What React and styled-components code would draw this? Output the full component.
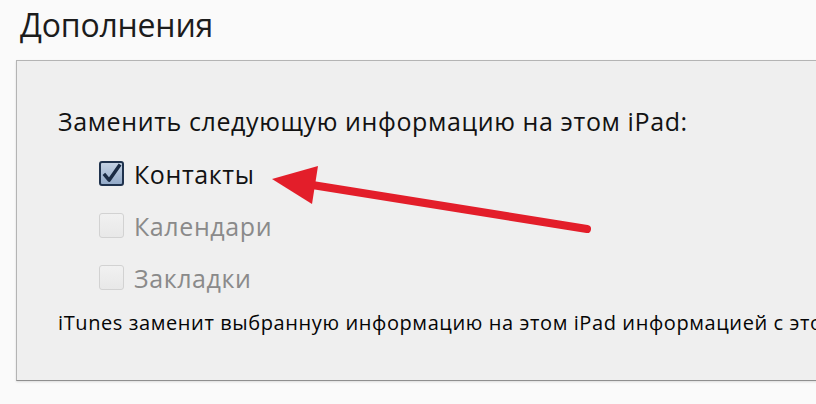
import React from "react";
import styled, { createGlobalStyle } from "styled-components";

const Global = createGlobalStyle`
  html, body {
    margin: 0;
    padding: 0;
    background: #fafafa;
    overflow: hidden;
  }
  body {
    font-family: "Open Sans", "Noto Sans", sans-serif;
  }
`;

const Page = styled.div`
  position: relative;
  width: 816px;
  height: 404px;
  overflow: hidden;
  padding: 0 0 0 16px;
  box-sizing: border-box;
`;

const Title = styled.h1`
  margin: 0;
  padding: 4px 0 0 4px;
  height: 56px;
  box-sizing: border-box;
  font-size: 32px;
  font-weight: 400;
  color: #1c1c1c;
  line-height: 42px;
  letter-spacing: -0.2px;
`;

const Panel = styled.section`
  width: 900px;
  height: 321px;
  box-sizing: border-box;
  margin-top: 4px;
  background: #efefef;
  border: 1px solid #b4b4b4;
  border-bottom-color: #8f8f8f;
  box-shadow: 0 1px 2px rgba(0, 0, 0, 0.12);
  padding: 44px 0 0 41px;
`;

const Question = styled.p`
  margin: 0 0 20px;
  font-size: 25px;
  line-height: 32px;
  letter-spacing: 0.6px;
  color: #121212;
`;

const Options = styled.ul`
  list-style: none;
  margin: 0;
  padding: 0 0 0 41px;
  display: flex;
  flex-direction: column;
  gap: 19px;
`;

const Option = styled.li`
  display: flex;
  align-items: center;
  gap: 10px;
  height: 33px;
  font-size: 25px;
  letter-spacing: 0.6px;
  color: ${(p) => (p.$checked ? "#121212" : "#8a8a8a")};
`;

const Box = styled.span`
  width: 25px;
  height: 25px;
  flex: none;
  box-sizing: border-box;
  border-radius: 3px;
  display: flex;
  align-items: center;
  justify-content: center;
  border: ${(p) => (p.$checked ? "2px solid #1f324d" : "1px solid #d2d2d2")};
  background: ${(p) =>
    p.$checked
      ? "linear-gradient(#c3d1e3, #93aac8)"
      : "linear-gradient(#f1f1f1, #e8e8e8)"};
`;

const Note = styled.p`
  margin: 16px 0 0;
  font-size: 20px;
  line-height: 26px;
  letter-spacing: 0.6px;
  color: #050505;
  white-space: nowrap;
`;

const Arrow = styled.svg`
  position: absolute;
  left: 0;
  top: 0;
  pointer-events: none;
`;

const Check = () => (
  <svg width="23" height="23" viewBox="0 0 22 22">
    <path
      d="M3 11.5 L8.5 18 L20 1.5"
      fill="none"
      stroke="#1a2b44"
      strokeWidth="3.6"
      strokeLinejoin="round"
    />
  </svg>
);

const options = [
  { label: "Контакты", checked: true },
  { label: "Календари", checked: false },
  { label: "Закладки", checked: false },
];

export default function App() {
  return (
    <>
      <Global />
      <Page>
        <Title>Дополнения</Title>
        <Panel>
          <Question>Заменить следующую информацию на этом iPad:</Question>
          <Options>
            {options.map((o) => (
              <Option key={o.label} $checked={o.checked}>
                <Box $checked={o.checked}>{o.checked && <Check />}</Box>
                {o.label}
              </Option>
            ))}
          </Options>
          <Note>
            iTunes заменит выбранную информацию на этом iPad информацией с этого компьютера.
          </Note>
        </Panel>
        <Arrow width="816" height="404" viewBox="0 0 816 404">
          <line
            x1="306"
            y1="184"
            x2="587"
            y2="229"
            stroke="#e31e2a"
            strokeWidth="8"
            strokeLinecap="round"
          />
          <polygon points="272,179 318,166 312,204" fill="#e31e2a" />
        </Arrow>
      </Page>
    </>
  );
}
